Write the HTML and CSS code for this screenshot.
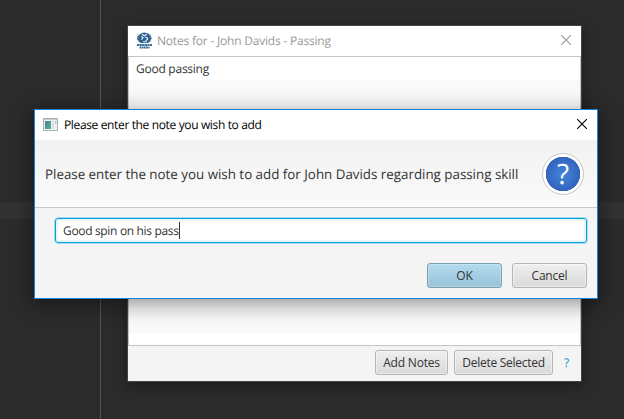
FILE: index.html
```html
<!DOCTYPE html>
<html lang="en">
<head>
<meta charset="utf-8">
<title>Notes</title>
<link rel="stylesheet" href="styles.css">
</head>
<body>
<main class="desktop">
  <div class="backdrop"><div class="backdrop-side"></div><div class="backdrop-row"></div></div>

  <section class="window notes">
    <header class="titlebar">
      <svg class="crest" width="17" height="17" viewBox="0 0 17 17">
        <path d="M5 1.500 8 .5l4 .8 2.500 2 1 3-1 3-2.500 1.700H5L2.500 9.500 1 7l.5-3z" fill="#2a5d90"/>
        <path d="M2 2.500 3.500 4M.8 5.500l2 .5M1.500 9l2-1M15.800 5.500l-2 .5M15.200 9l-2-1M14.500 2.500 13 4" stroke="#9fb8cf" stroke-width=".7"/>
        <path d="M6 2.200 8.500 3.800 11 2M5.200 4.500 7 5.500l-1.500 2.500M9 5.500c2-.8 3 .5 2.500 2L9.500 8.500M7 9.800h4" fill="none" stroke="#e9f1f7" stroke-width="1.100"/>
        <path d="M1 13h15" stroke-width="1.800" stroke="#3b6c9b" stroke-dasharray="2.200 .4"/>
        <path d="M3.500 15.500h10" stroke-width="1.800" stroke="#3b6c9b" stroke-dasharray="1.800 .4"/>
      </svg>
      <h1 class="title">Notes for - John Davids - Passing</h1>
      <svg class="close" width="10" height="10" viewBox="0 0 10 10"><path d="M0 0l10 10M10 0L0 10"/></svg>
    </header>
    <ul class="list"><li>Good passing</li></ul>
    <footer class="toolbar">
      <button class="button add">Add Notes</button>
      <button class="button delete">Delete Selected</button>
      <a class="help">?</a>
    </footer>
  </section>

  <section class="window dialog">
    <header class="titlebar">
      <svg class="app-icon" width="15" height="13" viewBox="0 0 15 13">
        <defs><linearGradient id="app" x2="1" y2="1"><stop stop-color="#4a7fa5"/><stop offset="1" stop-color="#57b37f"/></linearGradient></defs>
        <path d="M.5.5h14v12H.5z" fill="#f0f2f2" stroke="#a9afb3"/>
        <path d="M1 1.500h13" stroke="#c5cbd0"/>
        <path d="M2 3h6v8H2z" fill="url(#app)"/>
        <path d="M9 3h2v8H9z" fill="#dcdfe0"/>
        <path d="M12 3h1.500v3H12z" fill="#a9c9c5"/>
      </svg>
      <h2 class="title">Please enter the note you wish to add</h2>
      <svg class="close" width="10" height="10" viewBox="0 0 10 10"><path d="M0 0l10 10M10 0L0 10"/></svg>
    </header>
    <div class="prompt">
      <p class="message">Please enter the note you wish to add for John Davids regarding passing skill</p>
      <div class="question"><span>?</span></div>
    </div>
    <div class="form">
      <div class="field"><span class="value">Good spin on his pass</span><i class="caret"></i></div>
      <div class="actions">
        <button class="button primary">OK</button>
        <button class="button">Cancel</button>
      </div>
    </div>
  </section>
</main>
</body>
</html>
```

FILE: styles.css
```css
* { box-sizing: border-box; }
body { margin: 0; font: 12px/16px "Open Sans", "Noto Sans", sans-serif; color: #333; text-rendering: geometricPrecision; }
h1, h2, p, ul { margin: 0; padding: 0; font: inherit; list-style: none; }
.desktop { position: relative; width: 624px; height: 419px; overflow: hidden; background: #2b2b2b; }
.backdrop { position: absolute; inset: 0; }
.backdrop-side { width: 101px; height: 100%; border-right: 1px solid #555; }
.backdrop-row { position: absolute; top: 202px; left: 0; right: 0; height: 17px; background: #323232; }
.window { position: absolute; display: flex; flex-direction: column; }
.titlebar { display: flex; align-items: center; height: 30px; background: #fff; flex: none; }
.title { white-space: nowrap; }
.close { margin: -2px 0 0 auto; fill: none; stroke: currentColor; stroke-width: 1.1; }

.notes { left: 127px; top: 25px; width: 455px; height: 357px; border: 1px solid #444; background: #f4f4f4; box-shadow: 0 4px 13px rgba(0,0,0,.35); }
.notes .titlebar { padding: 0 10px 0 8px; color: #999; }
.crest { margin-right: 4px; margin-top: -2px; }
.notes .title { letter-spacing: -.2px; }
.list { height: 290px; border: 1px solid #c4c4c4; background: repeating-linear-gradient(#fff 0 23px, #f9f9f9 23px 46px); }
.list li { height: 23px; padding: 4px 7px; letter-spacing: -.25px; }
.toolbar { display: flex; gap: 6px; padding: 4px 0 0 247px; }

.button { height: 25px; margin: 0; padding: 0; border: 1px solid #b5b5b5; border-radius: 3px; background: linear-gradient(#efefef, #d9d9d9); box-shadow: inset 0 0 0 1px rgba(255,255,255,.45); font: inherit; letter-spacing: -.2px; color: #333; width: 75px; white-space: nowrap; }
.button.add { width: 73px; }
.button.delete { width: 99px; letter-spacing: -.27px; }
.button.primary { border-color: #7c9fb0; background: linear-gradient(#b2dbee, #98c2d8); box-shadow: inset 0 0 0 1px rgba(255,255,255,.25); }
.help { color: #0096c9; margin: 5px 0 0 5px; }

.dialog { left: 34px; top: 109px; width: 564px; height: 190px; border: 1px solid #1883d7; background: #f4f4f4; box-shadow: 0 4px 18px 2px rgba(0,0,0,.42); }
.dialog .titlebar { padding: 0 10px 0 8px; color: #000; }
.dialog .title { letter-spacing: -.36px; }
.app-icon { margin: -2px 6px 0 0; }
.prompt { display: flex; justify-content: space-between; align-items: center; height: 68px; padding: 0 13px 0 10px; border-bottom: 1px solid #c8c8c8; background: linear-gradient(#f2f2f2, #fafafa); }
.message { font-size: 13.35px; white-space: nowrap; }
.question { display: grid; place-items: center; width: 42px; height: 42px; border: 1px solid #c8c8c8; border-radius: 50%; background: radial-gradient(circle, #4387da 0, #3363bd 17px, #fff 17.500px); color: #fff; font: 28px/34px "Open Sans", sans-serif; }
.form { padding: 9px 9px 0 19px; }
.field { display: flex; align-items: center; height: 27px; padding: 0 8px; border: 1px solid #a9dced; border-radius: 4px; background: #fff; box-shadow: inset 0 0 0 1px #039ed3, inset 0 0 0 3px #e5f5fa; }
.value { letter-spacing: -.33px; }
.caret { width: 1px; height: 17px; background: #333; }
.actions { display: flex; justify-content: flex-end; gap: 10px; padding: 19px 1px 0 0; }
```
